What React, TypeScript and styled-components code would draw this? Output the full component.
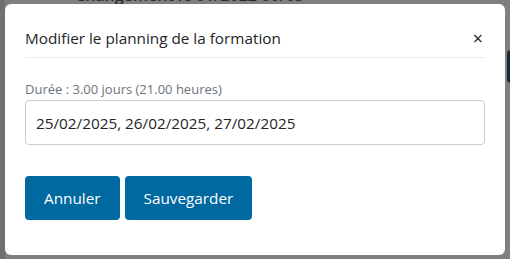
import React from 'react';
import styled, { createGlobalStyle } from 'styled-components';

const GlobalStyle = createGlobalStyle`
  html, body {
    margin: 0;
    padding: 0;
    background: #ffffff;
    font-family: 'Open Sans', 'Noto Sans', sans-serif;
  }
  * { box-sizing: border-box; }
`;

// page behind the dialog, mostly hidden
const Page = styled.div`
  width: 510px;
  height: 259px;
  overflow: hidden;
  display: flex;
  background: #ffffff;
`;

const Sidebar = styled.div`
  width: 5px;
  background: #e0e0e0;
`;

const PageMain = styled.div`
  flex: 1;
  display: flex;
  flex-direction: column;
  justify-content: space-between;
  padding-left: 30px;
`;

const PageLine = styled.div<{ $top?: boolean }>`
  font-size: 16px;
  color: #555;
  line-height: 20px;
  margin-top: ${p => (p.$top ? '-15px' : '0')};
  margin-bottom: ${p => (p.$top ? '0' : '-16px')};
  padding-left: ${p => (p.$top ? '40px' : '25px')};
  font-weight: 600;
`;

const PageButton = styled.div`
  position: absolute;
  left: 507px;
  top: 50px;
  width: 20px;
  height: 33px;
  border-radius: 4px;
  background: #385066;
`;

const Overlay = styled.div`
  position: fixed;
  inset: 0;
  background: rgba(0, 0, 0, 0.5);
  display: flex;
  align-items: flex-start;
  padding: 4px 5px;
`;

const Dialog = styled.div`
  width: 500px;
  height: 251px;
  background: #ffffff;
  border-radius: 6px;
  padding: 0 20px;
  display: flex;
  flex-direction: column;
`;

const Header = styled.div`
  display: flex;
  align-items: center;
  justify-content: space-between;
  height: 54px;
  padding-top: 14px;
  border-bottom: 1px solid #e9ecef;
`;

const Title = styled.h5`
  margin: 0;
  font-size: 15.3px;
  font-weight: 400;
  color: #212529;
`;

const Close = styled.button`
  border: none;
  background: none;
  padding: 0 2px 0 0;
  font-size: 18px;
  line-height: 1;
  color: #212529;
  cursor: pointer;
  font-family: inherit;
`;

const Body = styled.div`
  padding-top: 22px;
  display: flex;
  flex-direction: column;
`;

const Label = styled.label`
  font-size: 13px;
  color: #6c757d;
  line-height: 18px;
  margin-bottom: 2px;
`;

const DateInput = styled.input`
  width: 460px;
  height: 45px;
  border: 1px solid #cccccc;
  border-radius: 4px;
  padding: 0 10px;
  font-size: 15.3px;
  color: #212529;
  font-family: inherit;
  outline: none;
`;

const Footer = styled.div`
  display: flex;
  gap: 5px;
  margin-top: 31px;
`;

const Button = styled.button`
  height: 44px;
  padding: 0 19px;
  border: none;
  border-radius: 4px;
  background: #0069a0;
  color: #ffffff;
  font-size: 15.3px;
  font-family: inherit;
  cursor: pointer;
`;

const App: React.FC = () => {
  return (
    <>
      <GlobalStyle />
      <Page>
        <Sidebar />
        <PageMain>
          <PageLine $top>Changement le 01/2022 00/05</PageLine>
          <PageLine>vraiment</PageLine>
        </PageMain>
        <PageButton />
      </Page>
      <Overlay>
        <Dialog>
          <Header>
            <Title>Modifier le planning de la formation</Title>
            <Close aria-label="Fermer">×</Close>
          </Header>
          <Body>
            <Label>Durée : 3.00 jours (21.00 heures)</Label>
            <DateInput readOnly value="25/02/2025, 26/02/2025, 27/02/2025" />
          </Body>
          <Footer>
            <Button>Annuler</Button>
            <Button>Sauvegarder</Button>
          </Footer>
        </Dialog>
      </Overlay>
    </>
  );
};

export default App;
